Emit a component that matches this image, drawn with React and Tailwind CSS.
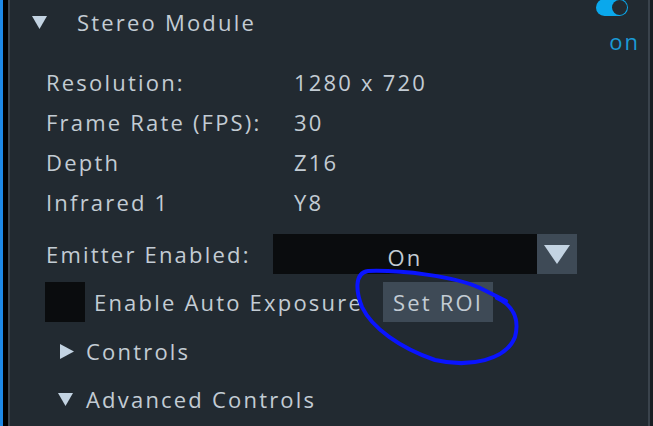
import React from 'react';

const font = { fontFamily: '"Open Sans", "Liberation Sans", sans-serif' };

function Row({ label, value }) {
  return (
    <div className="flex items-center h-10 pl-[36px]">
      <span className="w-[248px]">{label}</span>
      <span>{value}</span>
    </div>
  );
}

function Down({ w = 15, h = 13 }) {
  return (
    <svg width={w} height={h} viewBox={`0 0 ${w} ${h}`}><path d={`M0 0H${w}L${w / 2} ${h}z`} fill="#c3d3e2" /></svg>
  );
}

export default function App() {
  return (
    <div className="w-[653px] h-[426px] flex overflow-hidden bg-[#222a31] text-[#c3ccd4] text-[22px] tracking-[2.2px] leading-none" style={font}>
      {/* left edge */}
      <div className="w-[3px] bg-[#1e88e5]" />
      <div className="w-[5px] bg-black" />
      <div className="w-[2px] bg-[#3a434c]" />

      <div className="relative flex-1 flex flex-col">
        {/* header */}
        <div className="flex items-center h-[44px] pl-[22px]">
          <Down />
          <span className="ml-[30px]">Stereo Module</span>
        </div>

        <div className="absolute right-[20px] -top-[1px] w-[32px] h-[17px] rounded-full bg-[#0aa8ec]">
          <div className="absolute right-[1px] top-[1px] w-[15px] h-[15px] rounded-full bg-[#232a31]" />
        </div>
        <span className="absolute right-[8px] top-[30px] text-[#1a9ad6] text-[22px] tracking-[2px]">on</span>

        <div className="mt-[18px]">
          <Row label="Resolution:" value="1280 x 720" />
          <Row label="Frame Rate (FPS):" value="30" />
          <Row label="Depth" value="Z16" />
          <Row label="Infrared 1" value="Y8" />
        </div>

        {/* emitter */}
        <div className="flex items-center mt-[12px] pl-[36px]">
          <span className="w-[227px]">Emitter Enabled:</span>
          <div className="flex h-10">
            <div className="w-[264px] bg-[#0a0c0e] flex items-end justify-center pb-[6px]">On</div>
            <div className="w-10 bg-[#3e4a56] flex items-center justify-center">
              <svg width="26" height="19" viewBox="0 0 26 19"><path d="M0 0h26L13 19z" fill="#c3d3e2" /></svg>
            </div>
          </div>
        </div>

        {/* auto exposure */}
        <div className="flex items-center mt-[8px] pl-[35px]">
          <div className="w-10 h-10 bg-[#0a0c0e]" />
          <span className="ml-[9px] w-[289px] whitespace-nowrap">Enable Auto Exposure</span>
          <button className="h-10 w-[110px] bg-[#3e4a56] text-[#c3ccd4] tracking-[2.2px]">Set ROI</button>
        </div>

        <div className="flex items-center h-[42px] mt-[8px] pl-[50px]">
          <svg width="14" height="15" viewBox="0 0 14 15"><path d="M0 0L14 7.5L0 15z" fill="#c3d3e2" /></svg>
          <span className="ml-[12px]">Controls</span>
        </div>
        <div className="flex items-center h-[42px] mt-[6px] pl-[48px]">
          <Down />
          <span className="ml-[13px]">Advanced Controls</span>
        </div>

        {/* hand-drawn annotation */}
        <svg className="absolute left-[-10px] top-0 pointer-events-none" width="653" height="426">
          <path
            d="M480 288 C455 276 400 270 368 271 C354 273 356 292 362 307 C372 328 400 348 435 360 C470 368 506 360 515 337 C520 318 512 305 497 298 M478 287 L506 301"
            fill="none" stroke="#0a14ff" strokeWidth="4" strokeLinecap="round" strokeLinejoin="round"
          />
        </svg>
      </div>

      {/* right edge */}
      <div className="w-[2px] bg-[#3a434c]" />
      <div className="w-[3px] bg-[#181d22]" />
    </div>
  );
}
